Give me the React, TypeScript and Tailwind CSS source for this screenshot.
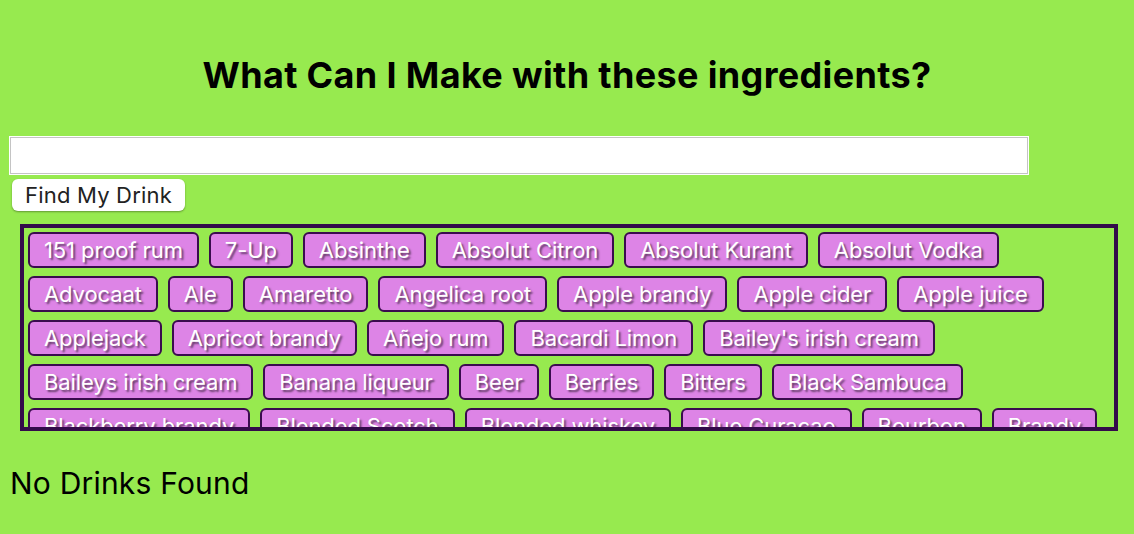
const ingredients = [
  '151 proof rum', '7-Up', 'Absinthe', 'Absolut Citron', 'Absolut Kurant', 'Absolut Vodka',
  'Advocaat', 'Ale', 'Amaretto', 'Angelica root', 'Apple brandy', 'Apple cider', 'Apple juice',
  'Applejack', 'Apricot brandy', 'Añejo rum', 'Bacardi Limon', "Bailey's irish cream",
  'Baileys irish cream', 'Banana liqueur', 'Beer', 'Berries', 'Bitters', 'Black Sambuca',
  'Blackberry brandy', 'Blended Scotch', 'Blended whiskey', 'Blue Curacao', 'Bourbon', 'Brandy',
  'Butterscotch schnapps', 'Cachaca', 'Campari', 'Champagne', 'Cherry brandy', 'Coffee liqueur',
];

export default function App() {
  return (
    <div className="min-h-screen bg-[#97ea4f] px-[10px] font-['Inter',sans-serif] text-black">
      <h1 className="pt-[52px] pb-[39px] text-center text-[36px] font-bold leading-[46px] tracking-[0.35px]">
        What Can I Make with these ingredients?
      </h1>
      <input
        type="text"
        className="block h-[37px] w-[1018px] border border-[#c4c4c4] bg-white outline outline-1 outline-white"
      />
      <button className="mt-[5px] ml-[2px] block h-[32px] rounded-[6px] bg-white px-[13px] text-[22px] leading-none tracking-[0.2px] text-[#222] shadow-[0_1px_2px_rgba(0,0,0,0.35)]">
        Find My Drink
      </button>
      <div className="mt-[13px] ml-[10px] h-[207px] w-[1098px] overflow-hidden border-4 border-[#330b4a]">
        <div className="flex flex-wrap gap-x-[10px] gap-y-[8px] p-[4px]">
          {ingredients.map((name) => (
            <button
              key={name}
              className="h-[36px] rounded-[6px] border-2 border-[#3a0c4e] bg-[#dd84e6] px-[14px] text-[22px] leading-none tracking-[-0.1px] text-white [text-shadow:2px_2px_2px_rgba(0,0,0,0.55)]"
            >
              {name}
            </button>
          ))}
        </div>
      </div>
      <p className="pt-[34px] text-[30px] leading-[36px] tracking-[0.2px]">No Drinks Found</p>
    </div>
  );
}
